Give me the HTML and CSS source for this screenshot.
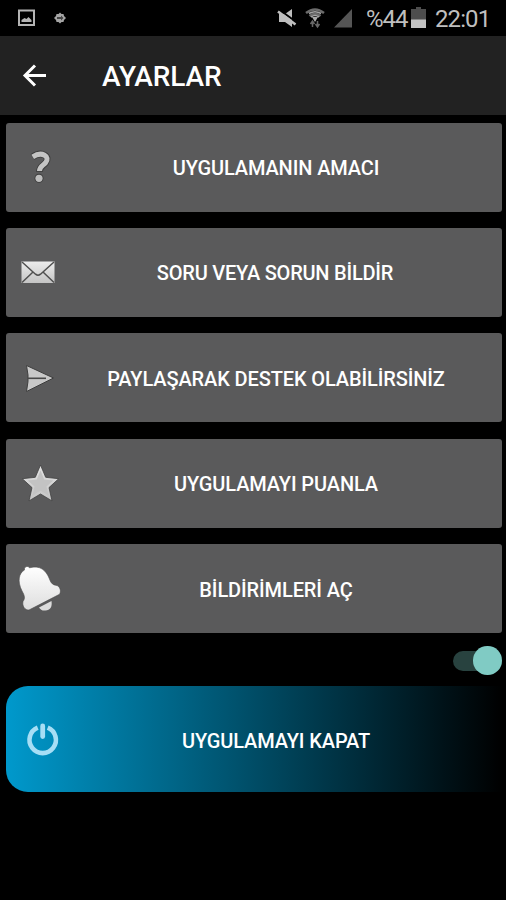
FILE: index.html
```
<!DOCTYPE html>
<html lang="tr">
<head>
    <meta charset="utf-8">
    <title>Ayarlar</title>
    <link rel="stylesheet" href="styles.css">
</head>
<body>
    <div class="status-bar">
        <svg class="status-left" width="60" height="36" viewBox="0 0 60 36">
            <path d="M2 10.500h15v14.500H2z" fill="none" stroke="#b4b4b4" stroke-width="2"/>
            <path d="M4.500 22v-2l3-2 2 1 2-2 3 3v2z" fill="#b4b4b4"/>
            <path d="M43 12.500l1.500 1.500h2l.5 2 2 2-2 2-.5 2h-2L43 23.500 41.500 22h-2l-.5-2-2-2 2-2 .5-2h2z" fill="#a5a5a5"/>
            <path d="M40 17h4v-1.500l2.500 2.500-2.500 2.500V19h-4z" fill="#444"/>
        </svg>
        <svg class="status-icons" width="80" height="36" viewBox="276 0 80 36">
            <path d="M279 14h6l7-5v18l-7-5h-6z" fill="#bebebe"/>
            <path d="M279 9.500l18 13" stroke="#000" stroke-width="2"/>
            <path d="M278 11.500l17.500 13" stroke="#bebebe" stroke-width="2.600"/>
            <path d="M306 13q9-7 18 0M309.500 16q5.500-4.500 11 0" fill="none" stroke="#6c6c6c" stroke-width="2.500"/>
            <path d="M309 13.500q6-3.500 12 0M311 17q4-3 8 0" fill="none" stroke="#a6a6a6" stroke-width="1.600"/>
            <path d="M312 17h6l-3 5z" fill="#aaa"/>
            <path d="M312.500 27v-6M310.500 24l2-3 2 3M317.500 21v6M315.500 24l2 3 2-3" fill="none" stroke="#686868" stroke-width="1.500"/>
            <path d="M352 9v18.500h-18z" fill="#555"/>
        </svg>
        <span class="battery-text">%44</span>
        <svg class="battery" width="16" height="36" viewBox="0 0 16 36">
            <path d="M0 9h5V7h5v2h5v19H0z" fill="#4d4d4d"/>
            <path d="M0 19.500h15V28H0z" fill="#c2c2c2"/>
        </svg>
        <span class="clock">22:01</span>
    </div>

    <div class="toolbar">
        <svg class="back" width="28" height="28" viewBox="0 0 28 28">
            <path d="M26 13.500H5M15 3.500l-10 10 10 10" fill="none" stroke="#fff" stroke-width="3"/>
        </svg>
        <h1>AYARLAR</h1>
    </div>

    <svg class="defs" width="0" height="0">
        <defs>
            <linearGradient id="silver" x1="0" y1="0" x2="0" y2="1">
                <stop offset="0" stop-color="#e4e4e4"/>
                <stop offset="1" stop-color="#c4c4c4"/>
            </linearGradient>
            <linearGradient id="mail" x1="0" y1="0" x2="0" y2="1">
                <stop offset="0" stop-color="#ececec"/>
                <stop offset="1" stop-color="#c4c4c4"/>
            </linearGradient>
            <linearGradient id="white" x1="0" y1="0" x2="0" y2="1">
                <stop offset="0" stop-color="#fff"/>
                <stop offset="1" stop-color="#dedede"/>
            </linearGradient>
        </defs>
    </svg>

    <div class="menu">
        <button class="item">
            <svg class="icon" viewBox="0 0 60 60">
                <path d="M22.500 20C32 13.500 41 19.500 35.500 26c-3 3.200-6 3.700-6 8.800" fill="none" stroke="#3c3c3c" stroke-width="6.800"/>
                <circle cx="29" cy="41.300" r="4.500" fill="#3c3c3c"/>
                <path d="M22.700 19.800C32 13.800 40.800 19.500 35.500 25.800c-3 3.200-6 3.700-6 8.200" fill="none" stroke="#c4c4c4" stroke-width="5"/>
                <circle cx="29" cy="41.300" r="3.600" fill="#bdbdbd"/>
            </svg>
            <span>UYGULAMANIN AMACI</span>
        </button>
        <button class="item mail">
            <svg class="icon" viewBox="0 0 60 60">
                <path d="M11.500 19.500h33v21.500h-33z" fill="url(#mail)"/>
                <path d="M12 20l13.500 12.200q2.500 2 5 0L44 20M12 40.500l11-10.500M44 40.500L33 30" fill="none" stroke="#505050" stroke-width="1.500"/>
            </svg>
            <span>SORU VEYA SORUN BİLDİR</span>
        </button>
        <button class="item">
            <svg class="icon" viewBox="0 0 60 60">
                <path d="M16.500 17.500L43.500 30 16.500 43.500l1.500-10V27z" fill="#c8c8c8" stroke="#3e3e3e"/>
                <path d="M18 30.300h18" stroke="#484848" stroke-width="1.600"/>
            </svg>
            <span>PAYLAŞARAK DESTEK OLABİLİRSİNİZ</span>
        </button>
        <button class="item">
            <svg class="icon" viewBox="0 0 60 60">
                <path d="M30.500 12l5.200 12.300 13 1.400-9.700 8.900 3 13.300-11.500-6.900L19 47.900l3-13.300-9.700-8.900 13-1.400z" fill="url(#silver)" stroke="#404040" stroke-width=".8"/>
                <path d="M30.500 17.500l3.700 9 9 1-6.700 6.100 2.100 9-8.100-4.900-8.100 4.900 2.100-9-6.700-6.100 9-1z" fill="#c3c3c3"/>
            </svg>
            <span>UYGULAMAYI PUANLA</span>
        </button>
        <button class="item">
            <svg class="icon" viewBox="0 0 60 60">
                <path d="M14.500 11c-1-3 3.500-5 5-2.200C30 6 36 11 39.500 20c1.500 4.500 3.500 6 7.500 6.500 3 1 4.500 6 2.500 8.800L19 51c-4 .5-7-4-6-8.500 2.500-3.500 1.500-6-1-10.500C7 22 9 14 14.500 11z" fill="url(#white)" stroke="#4a4a4a" stroke-width=".6"/>
                <path d="M29 48.500L41.500 42c1 6-1.500 9.500-6 9.500-3 .5-5-.8-6.500-3z" fill="#dcdcdc"/>
            </svg>
            <span>BİLDİRİMLERİ AÇ</span>
        </button>

        <div class="switch">
            <div class="track"></div>
            <div class="thumb"></div>
        </div>

        <button class="item close">
            <svg class="icon" viewBox="0 0 60 60">
                <path d="M27.700 18.700a13.200 13.200 0 1 0 10 0" fill="none" stroke="#a6def5" stroke-width="4.600"/>
                <path d="M32.700 17v10.500" stroke="#a6def5" stroke-width="4.800" stroke-linecap="round"/>
            </svg>
            <span>UYGULAMAYI KAPAT</span>
        </button>
    </div>
</body>
</html>
```
FILE: styles.css
```
body {
    margin: 0;
    height: 900px;
    overflow: hidden;
    background-color: #000;
    color: #fff;
    font-family: Roboto, sans-serif;
}
svg {
    display: block;
    flex: none;
}
.status-bar {
    display: flex;
    align-items: center;
    height: 36px;
    padding-left: 17px;
    color: #bfbfbf;
    font-size: 24px;
}
.status-bar span {
    padding-top: 1px;
}
.status-icons {
    margin-left: 199px;
}
.battery-text {
    width: 45px;
    margin-left: 10px;
    letter-spacing: -1px;
}
.battery {
    margin-right: 8px;
}
.clock {
    letter-spacing: -0.9px;
}
.toolbar {
    display: flex;
    align-items: center;
    height: 79px;
    padding-left: 20px;
    background-color: #222;
}
h1 {
    margin: 2px 0 0 54px;
    font-size: 28px;
    font-weight: 500;
    letter-spacing: -0.1px;
}
.defs {
    position: absolute;
}
.menu {
    display: flex;
    flex-direction: column;
    gap: 16.400px;
    padding: 7.600px 4.500px 0 6px;
}
.item {
    display: flex;
    align-items: center;
    height: 89px;
    padding: 0 19.500px 0 4px;
    border: none;
    border-radius: 3px;
    background-color: #5a5a5b;
    color: #fff;
    font-family: Roboto, sans-serif;
    font-size: 20px;
    font-weight: 500;
    letter-spacing: -0.12px;
}
.item span {
    flex: 1;
    padding-top: 2px;
    text-align: center;
    white-space: nowrap;
}
.mail {
    padding-right: 21.500px;
    letter-spacing: -0.22px;
}
.icon {
    width: 60px;
    height: 60px;
}
.switch {
    display: flex;
    align-items: center;
    justify-content: flex-end;
    height: 28px;
    margin-top: -3px;
    margin-bottom: -5px;
}
.track {
    width: 34px;
    height: 20px;
    margin-right: -14px;
    border-radius: 10px;
    background-color: #28423f;
}
.thumb {
    position: relative;
    width: 28.500px;
    height: 28.500px;
    border-radius: 50%;
    background-color: #80cbc4;
}
.close {
    height: 106.500px;
    border-radius: 22px 0 0 22px;
    background: linear-gradient(to right, #0099cc, #000);
}
.close span {
    padding-top: 3px;
}
```
